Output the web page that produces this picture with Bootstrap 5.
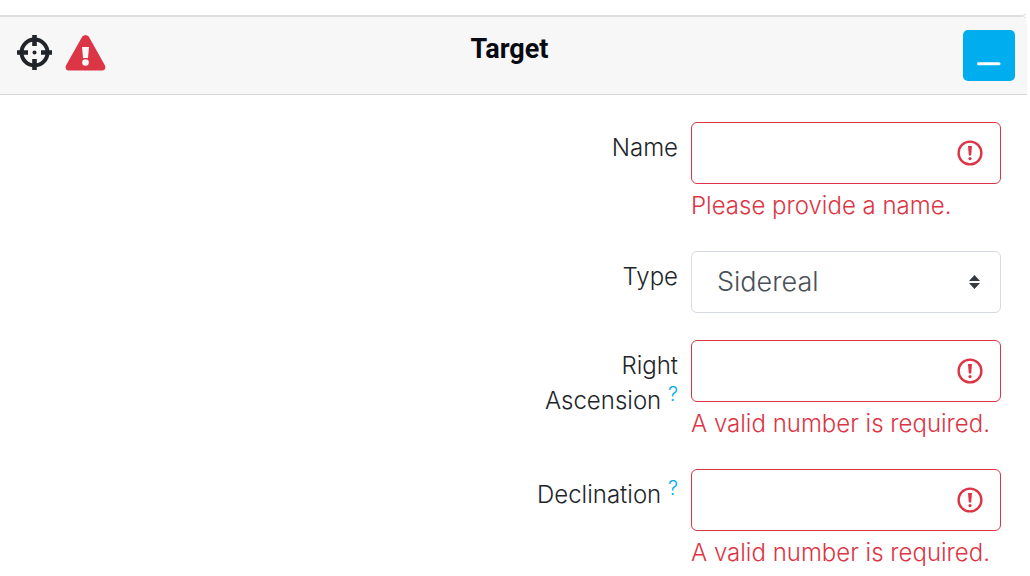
<!DOCTYPE html>
<html lang="en">
<head>
<meta charset="utf-8">
<meta name="viewport" content="width=device-width, initial-scale=1">
<title>Target</title>
<link href="https://cdn.jsdelivr.net/npm/bootstrap@5.3.0/dist/css/bootstrap.min.css" rel="stylesheet">
<style>
  body { font-family: Inter, "Liberation Sans", sans-serif; font-weight: 300; font-size: 24px; line-height: 35px; color: #212529; }
  .panel-above { height: 16px; margin-right: 2px; border: solid #dcdfdf; border-width: 0 1px 1px 0; border-right-color: transparent; border-radius: 0 0 6px 0; }
  .target-panel { margin-left: -9px; margin-right: 2px; border: solid #dcdfdf; border-width: 1px 1px 0 0; border-right-color: transparent; border-radius: 0 6px 0 0; }
  .target-head { display: grid; grid-template-columns: 1fr auto 1fr; padding: 13px 12px 13px 13px; background: #f7f7f7; border-bottom: 1px solid #d5d6d7; border-radius: 0 5px 0 0; }
  .head-icons { display: flex; gap: 12px; padding: 5px 0 0 12px; }
  .target-title { font-family: Roboto, sans-serif; font-weight: 700; font-size: 27px; line-height: 38px; color: #080b12; }
  .btn-collapse { width: 52px; height: 51px; padding: 0; border: 0; border-radius: 5px; background: #00adef; }
  .btn-collapse:hover { background: #0098d3; }
  .target-form { display: grid; gap: 27px; padding: 27px 26px 27px 27px; }
  .field-row { display: grid; grid-template-columns: 1fr 310px; gap: 13px; }
  .field-label { justify-self: end; padding-top: 8px; text-align: right; }
  .field-label a { font-size: 20px; color: #00adef; text-decoration: none; }
  .field-label sup { top: -8px; font-size: 20px; line-height: 0; vertical-align: baseline; }
  .field-box { height: 62px; padding: 8px 25px; border-radius: 6px; font-size: 27px; font-weight: 300; color: #495057; }
  .form-control.is-invalid.field-box { padding-right: 60px; background-position: right 17px center; background-size: 26px 26px;
    background-image: url("data:image/svg+xml,%3Csvg xmlns='http://www.w3.org/2000/svg' viewBox='0 0 26 26' fill='none' stroke='%23dc3545'%3E%3Ccircle cx='13' cy='13' r='11.4' stroke-width='2.4'/%3E%3Cpath d='M11 6h4l-.8 9.500h-2.400z' fill='%23dc3545' stroke='none'/%3E%3Ccircle cx='13' cy='18.600' r='1.600' fill='%23dc3545' stroke='none'/%3E%3C/svg%3E"); }
  .form-select.field-box { border-color: #d5d9e0; background-position: right 20px center; background-size: 11px 14px;
    background-image: url("data:image/svg+xml,%3Csvg xmlns='http://www.w3.org/2000/svg' viewBox='0 0 11 14'%3E%3Cpath fill='%23343a40' d='M5.5 0L11 6H0zm0 14L0 8h11z'/%3E%3C/svg%3E"); }
  .field-note.invalid-feedback { margin-top: 4px; font-size: 24px; line-height: 36px; color: #dc3545; }
</style>
</head>
<body class="overflow-x-hidden">
<div class="panel-above"></div>
<main class="card target-panel">
  <header class="target-head">
    <div class="head-icons">
      <svg width="36" height="36" viewBox="0 0 36 36" fill="none" stroke="#212529" stroke-width="4" role="img" aria-label="Target">
        <circle cx="18.500" cy="17.500" r="13"/>
        <circle cx="18.500" cy="17.500" r="2" fill="#212529" stroke="none"/>
        <path d="M18.500 0v11M18.500 24v11M1 17.500h11M25 17.500h11" stroke-width="4.6"/>
      </svg>
      <svg width="42" height="36" viewBox="0 0 42 36" role="img" aria-label="Incomplete">
        <path fill="#dc3545" d="M18.300 1.500q3.200-3 6.400 0L41 30.500q1.500 4-2.700 5H4.700q-4.200-1-2.700-5z"/>
        <path fill="#f7f7f7" d="M18 12h7l-1 11h-5z"/>
        <circle cx="21.500" cy="27.500" r="3.300" fill="#f7f7f7"/>
      </svg>
    </div>
    <h1 class="target-title m-0">Target</h1>
    <button type="button" class="btn btn-collapse ms-auto" aria-label="Collapse">
      <svg class="d-block" width="52" height="51" viewBox="0 0 52 51"><path d="M15.500 33.700h20.500" stroke="#fff" stroke-width="3" stroke-linecap="round"/></svg>
    </button>
  </header>
  <form class="target-form" novalidate>
    <div class="field-row">
      <label class="field-label" for="name">Name</label>
      <div>
        <input type="text" class="form-control is-invalid field-box" id="name" aria-describedby="name-note">
        <div class="invalid-feedback field-note" id="name-note">Please provide a name.</div>
      </div>
    </div>
    <div class="field-row">
      <label class="field-label" for="type">Type</label>
      <select class="form-select field-box" id="type"><option>Sidereal</option></select>
    </div>
    <div class="field-row">
      <label class="field-label" for="ra">Right<br>Ascension <sup><a href="#ra" title="Help">?</a></sup></label>
      <div>
        <input type="text" class="form-control is-invalid field-box" id="ra" aria-describedby="ra-note">
        <div class="invalid-feedback field-note" id="ra-note">A valid number is required.</div>
      </div>
    </div>
    <div class="field-row">
      <label class="field-label" for="dec">Declination <sup><a href="#dec" title="Help">?</a></sup></label>
      <div>
        <input type="text" class="form-control is-invalid field-box" id="dec" aria-describedby="dec-note">
        <div class="invalid-feedback field-note" id="dec-note">A valid number is required.</div>
      </div>
    </div>
  </form>
</main>
<script src="https://cdn.jsdelivr.net/npm/bootstrap@5.3.0/dist/js/bootstrap.bundle.min.js"></script>
</body>
</html>
